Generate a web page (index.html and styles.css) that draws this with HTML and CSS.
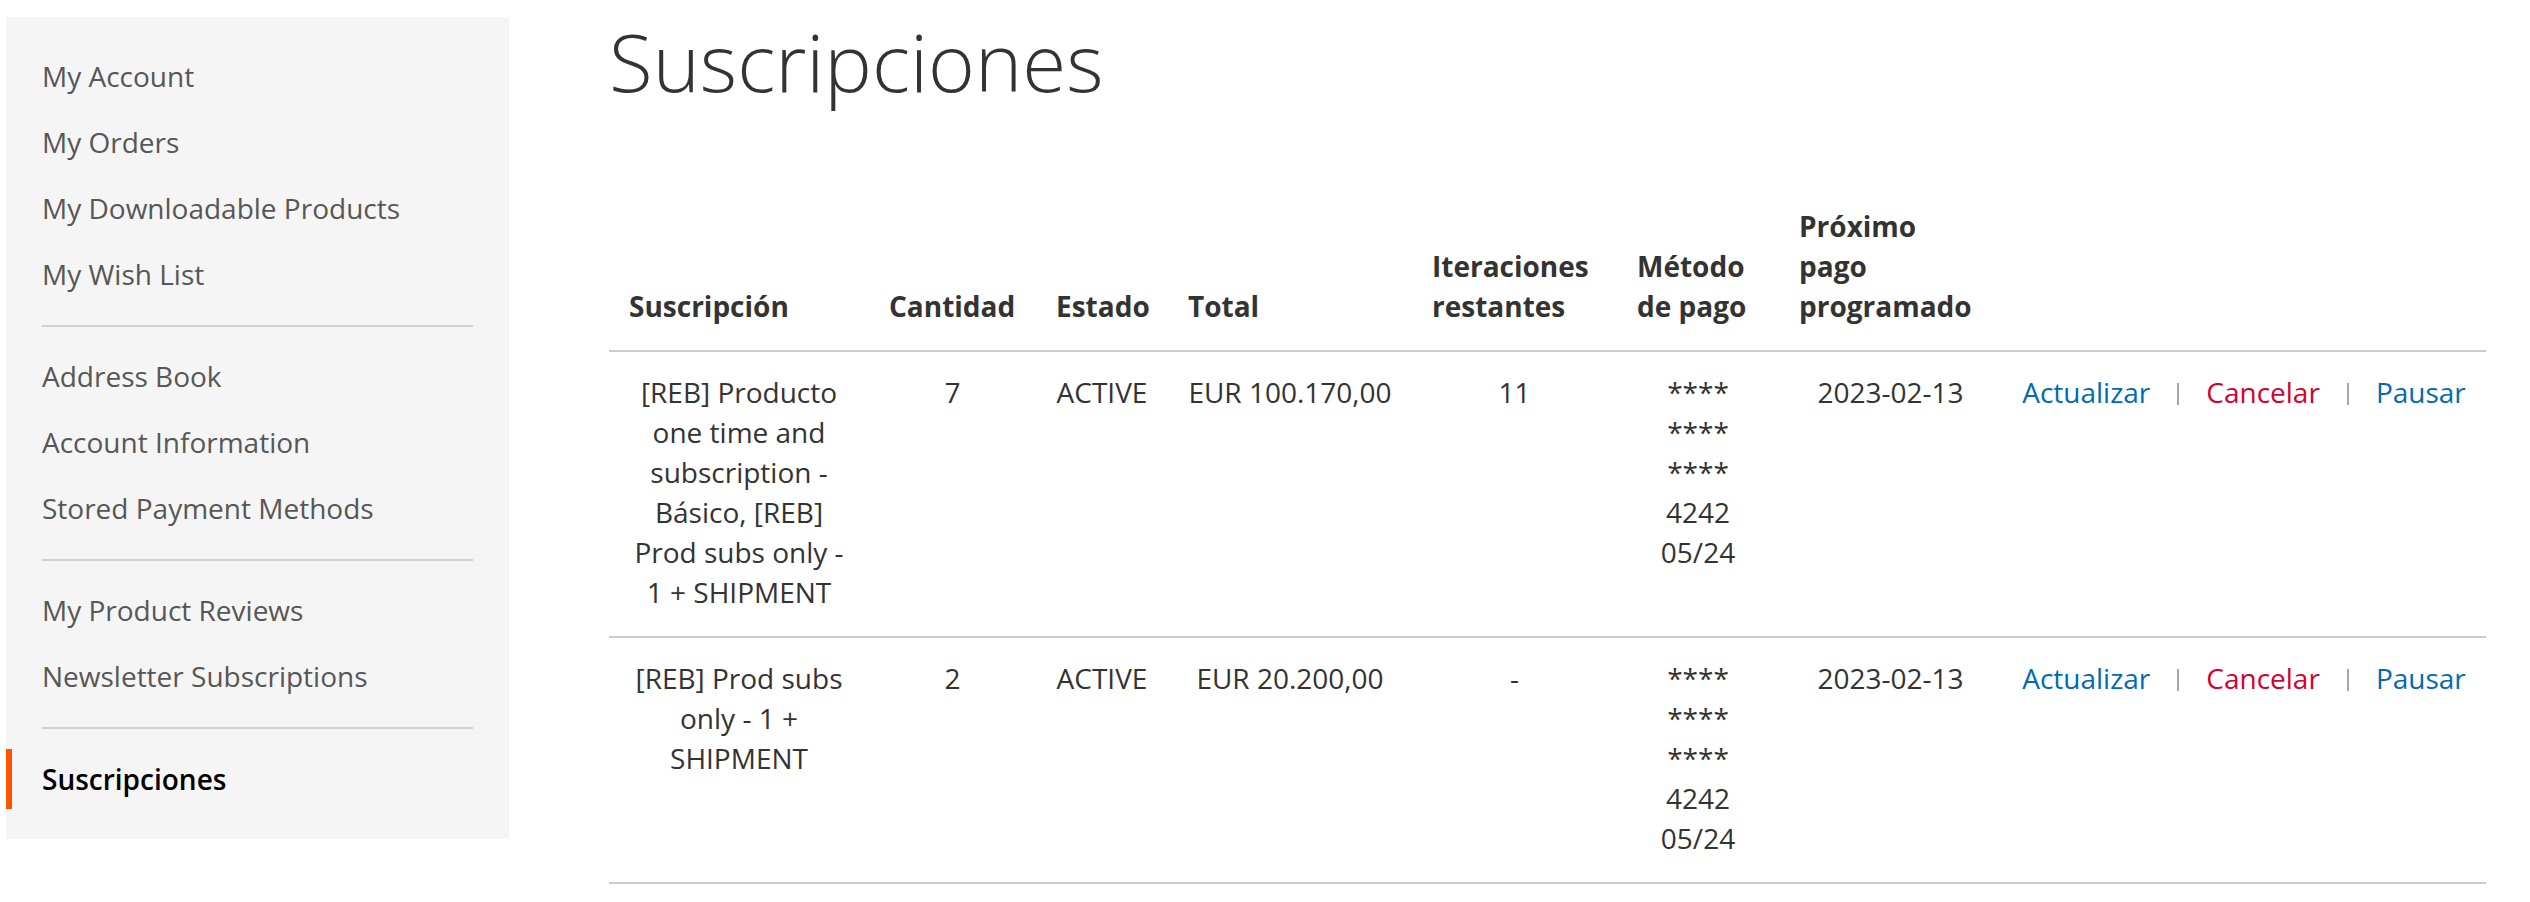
FILE: index.html
```html
<!DOCTYPE html>
<html lang="es">
<head>
<meta charset="utf-8">
<title>Suscripciones</title>
<link rel="stylesheet" href="styles.css">
</head>
<body>
<div class="page">
  <aside class="sidebar">
    <ul class="nav">
      <li class="nav-item"><a class="nav-link" href="#">My Account</a></li>
      <li class="nav-item"><a class="nav-link" href="#">My Orders</a></li>
      <li class="nav-item"><a class="nav-link" href="#">My Downloadable Products</a></li>
      <li class="nav-item"><a class="nav-link" href="#">My Wish List</a></li>
      <li class="nav-divider"></li>
      <li class="nav-item"><a class="nav-link" href="#">Address Book</a></li>
      <li class="nav-item"><a class="nav-link" href="#">Account Information</a></li>
      <li class="nav-item"><a class="nav-link" href="#">Stored Payment Methods</a></li>
      <li class="nav-divider"></li>
      <li class="nav-item"><a class="nav-link" href="#">My Product Reviews</a></li>
      <li class="nav-item"><a class="nav-link" href="#">Newsletter Subscriptions</a></li>
      <li class="nav-divider"></li>
      <li class="nav-item current"><strong class="nav-link">Suscripciones</strong></li>
    </ul>
  </aside>
  <main class="main">
    <h1 class="page-title">Suscripciones</h1>
    <table class="subs-table">
      <colgroup>
        <col class="c-sub">
        <col class="c-qty">
        <col class="c-state">
        <col class="c-total">
        <col class="c-iter">
        <col class="c-method">
        <col class="c-next">
        <col class="c-actions">
      </colgroup>
      <thead>
        <tr>
          <th>Suscripción</th>
          <th>Cantidad</th>
          <th>Estado</th>
          <th>Total</th>
          <th>Iteraciones restantes</th>
          <th>Método de pago</th>
          <th>Próximo pago programado</th>
          <th></th>
        </tr>
      </thead>
      <tbody>
        <tr>
          <td>[REB] Producto one time and subscription - Básico, [REB] Prod subs only - 1 + SHIPMENT</td>
          <td>7</td>
          <td>ACTIVE</td>
          <td class="nowrap">EUR 100.170,00</td>
          <td>11</td>
          <td>**** **** **** 4242 05/24</td>
          <td class="nowrap">2023-02-13</td>
          <td class="actions"><a class="act" href="#">Actualizar</a><span class="sep"></span><a class="act cancel" href="#">Cancelar</a><span class="sep"></span><a class="act" href="#">Pausar</a></td>
        </tr>
        <tr>
          <td>[REB] Prod subs only - 1 + SHIPMENT</td>
          <td>2</td>
          <td>ACTIVE</td>
          <td class="nowrap">EUR 20.200,00</td>
          <td>-</td>
          <td>**** **** **** 4242 05/24</td>
          <td class="nowrap">2023-02-13</td>
          <td class="actions"><a class="act" href="#">Actualizar</a><span class="sep"></span><a class="act cancel" href="#">Cancelar</a><span class="sep"></span><a class="act" href="#">Pausar</a></td>
        </tr>
      </tbody>
    </table>
  </main>
</div>
</body>
</html>
```
FILE: styles.css
```css
html, body {
  margin: 0;
  padding: 0;
  background: #ffffff;
}

body {
  font-family: "Open Sans", "Noto Sans", "Liberation Sans", sans-serif;
  color: #333333;
}

.page {
  display: flex;
  align-items: flex-start;
  padding: 17px 44px 0 6px;
}

/* Sidebar */
.sidebar {
  flex: none;
  width: 503px;
  background: #f5f5f5;
  padding: 30px 0;
}

.nav {
  list-style: none;
  margin: 0;
  padding: 0;
}

.nav-item {
  margin-top: 6px;
}

.nav-item:first-child,
.nav-divider + .nav-item {
  margin-top: 0;
}

.nav-link {
  display: block;
  padding: 9px 36px 11px 30px;
  border-left: 6px solid transparent;
  font-size: 28px;
  line-height: 40px;
  color: #575757;
  text-decoration: none;
}

.nav-item.current .nav-link {
  padding-top: 10px;
  padding-bottom: 10px;
  border-left-color: #ff5501;
  color: #000000;
  font-weight: 600;
}

.nav-divider {
  height: 0;
  border-top: 2px solid #d1d1d1;
  margin: 20px 36px;
}

/* Main */
.main {
  flex: 1;
  min-width: 0;
  margin-left: 100px;
}

.page-title {
  margin: 0;
  font-size: 80px;
  font-weight: 300;
  line-height: 88px;
  color: #333333;
}

.subs-table {
  width: 100%;
  table-layout: fixed;
  border-collapse: separate;
  border-spacing: 0;
  margin-top: 81px;
  font-size: 28px;
  line-height: 40px;
  color: #333333;
}

.c-sub { width: 260px; }
.c-qty { width: 167px; }
.c-state { width: 132px; }
.c-total { width: 244px; }
.c-iter { width: 205px; }
.c-method { width: 162px; }
.c-next { width: 223px; }
.c-actions { width: 484px; }

.subs-table th {
  padding: 20px 20px 24px;
  text-align: left;
  vertical-align: bottom;
  font-weight: 700;
  border-bottom: 2px solid #cccccc;
}

.subs-table td {
  padding: 20px 20px 24px;
  text-align: center;
  vertical-align: top;
  font-weight: 400;
  border-bottom: 2px solid #cccccc;
}

.subs-table td.nowrap,
.subs-table td.actions {
  white-space: nowrap;
}

.act {
  color: #006bb4;
  text-decoration: none;
}

.act.cancel {
  color: #d60030;
}

.sep {
  display: inline-block;
  width: 2px;
  height: 22px;
  margin: 0 27px;
  background: #a6a6a6;
  vertical-align: -2px;
}
```
